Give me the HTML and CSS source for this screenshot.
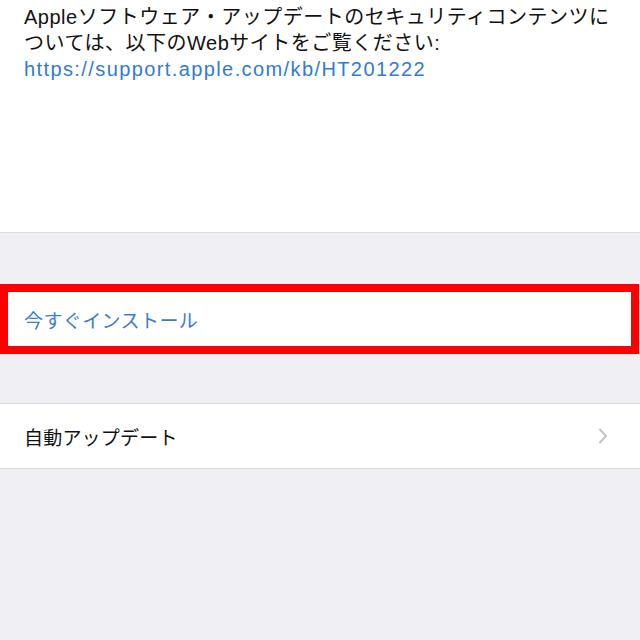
FILE: index.html
```html
<!DOCTYPE html>
<html lang="ja">
<head>
<meta charset="utf-8">
<link rel="stylesheet" href="styles.css">
</head>
<body>
<div class="info">
  <p class="desc">Appleソフトウェア・アップデートのセキュリティコンテンツに<br>ついては、以下のWebサイトをご覧ください:</p>
  <a class="link">https://support.apple.com/kb/HT201222</a>
</div>
<div class="group install-group">
  <div class="cell install">
    <span class="action">今すぐインストール</span>
    <div class="highlight"></div>
  </div>
</div>
<div class="group auto-group">
  <div class="cell auto">
    <span class="label">自動アップデート</span>
    <svg class="chevron" width="10" height="16" viewBox="0 0 10 16"><path d="M2 1.5 L8 8 L2 14.5" fill="none" stroke="#c4c4c9" stroke-width="2" stroke-linecap="round" stroke-linejoin="round"/></svg>
  </div>
</div>
</body>
</html>
```
FILE: styles.css
```css
html, body {
  margin: 0;
  padding: 0;
}
body {
  width: 640px;
  height: 640px;
  background: #efeff4;
  font-family: "Liberation Sans", "Noto Sans CJK JP", sans-serif;
  overflow: hidden;
}
.info {
  background: #fff;
  height: 233px;
  box-sizing: border-box;
  padding: 4px 0 0 24px;
  border-bottom: 1px solid #d9d9de;
}
.desc {
  margin: 0;
  font-size: 20px;
  line-height: 26px;
  letter-spacing: 0.5px;
  color: #111;
  white-space: nowrap;
}
.link {
  display: block;
  font-size: 20px;
  line-height: 26px;
  letter-spacing: 1.4px;
  color: #2f7bd6;
}
.install-group {
  margin-top: 51px;
}
.cell {
  background: #fff;
  display: flex;
  align-items: center;
  padding: 0 24px;
  box-sizing: border-box;
  font-size: 19px;
}
.install {
  position: relative;
  height: 70px;
}
.action {
  color: #3a7ccf;
  letter-spacing: 0.4px;
}
.highlight {
  position: absolute;
  left: 0;
  top: 0;
  right: 1px;
  bottom: 0;
  border: 8px solid #ff0000;
}
.auto-group {
  margin-top: 49px;
}
.auto {
  height: 66px;
  border-top: 1px solid #d9d9de;
  border-bottom: 1px solid #d9d9de;
  justify-content: space-between;
  padding-right: 32px;
}
.label {
  color: #111;
  letter-spacing: 0.2px;
}
.chevron {
  display: block;
}
```
